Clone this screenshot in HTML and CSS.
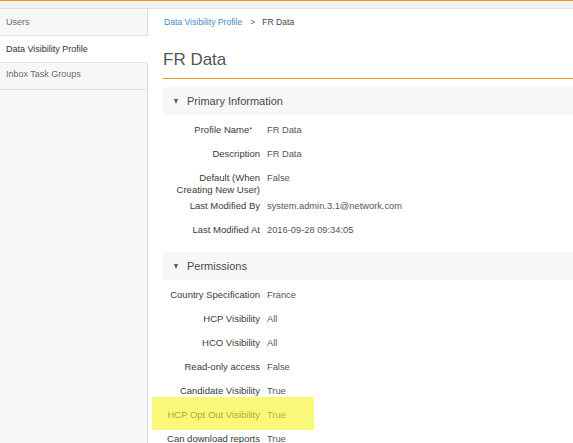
FILE: index.html
```html
<!DOCTYPE html>
<html>
<head>
<meta charset="utf-8">
<link rel="stylesheet" href="styles.css">
</head>
<body>
<div class="topbar"></div>
<div class="app">
  <nav class="sidebar">
    <div class="nav-item">Users</div>
    <div class="nav-item active">Data Visibility Profile</div>
    <div class="nav-item">Inbox Task Groups</div>
  </nav>
  <main class="main">
    <div class="breadcrumb"><span class="crumb-link">Data Visibility Profile</span><span class="crumb-sep">&gt;</span><span class="crumb-current">FR Data</span></div>
    <h1 class="title">FR Data</h1>

    <section class="section">
      <div class="section-header"><span class="caret"></span>Primary Information</div>
      <div class="section-body">
        <div class="row"><div class="label">Profile Name<span class="req">*</span></div><div class="value">FR Data</div></div>
        <div class="row"><div class="label">Description</div><div class="value">FR Data</div></div>
        <div class="row"><div class="label">Default (When Creating New User)</div><div class="value">False</div></div>
        <div class="row"><div class="label">Last Modified By</div><div class="value">system.admin.3.1@network.com</div></div>
        <div class="row"><div class="label">Last Modified At</div><div class="value">2016-09-28 09:34:05</div></div>
      </div>
    </section>

    <section class="section">
      <div class="section-header"><span class="caret"></span>Permissions</div>
      <div class="section-body">
        <div class="row"><div class="label">Country Specification</div><div class="value">France</div></div>
        <div class="row"><div class="label">HCP Visibility</div><div class="value">All</div></div>
        <div class="row"><div class="label">HCO Visibility</div><div class="value">All</div></div>
        <div class="row"><div class="label">Read-only access</div><div class="value">False</div></div>
        <div class="row"><div class="label">Candidate Visibility</div><div class="value">True</div></div>
        <div class="row marked"><div class="label">HCP Opt Out Visibility</div><div class="value">True</div><span class="highlight"></span></div>
        <div class="row"><div class="label">Can download reports</div><div class="value">True</div></div>
      </div>
    </section>
  </main>
</div>
</body>
</html>
```
FILE: styles.css
```css
html, body {
  margin: 0;
  padding: 0;
  height: 100%;
  overflow: hidden;
  background: #fff;
}

body {
  font-family: "Liberation Sans", Arial, Helvetica, sans-serif;
  color: #555;
}

.topbar {
  height: 7px;
  background: #f1f1f1;
  border-top: 1px solid #f7941d;
  border-bottom: 1px solid #dedede;
}

.app {
  display: flex;
  height: calc(100% - 9px);
}

.sidebar {
  width: 147px;
  flex: 0 0 147px;
  background: #f7f7f7;
  border-right: 1px solid #e1e1e1;
}

.nav-item {
  height: 26px;
  box-sizing: content-box;
  display: flex;
  align-items: center;
  padding-left: 6px;
  padding-bottom: 0;
  font-size: 9px;
  line-height: 10px;
  color: #6b6b6b;
  border-bottom: 1px solid #e3e3e3;
}

.nav-item:last-child {
  align-items: flex-start;
  padding-top: 6px;
  height: 20px;
}

.nav-item.active {
  background: #fff;
  color: #333;
  margin-right: -1px;
}

.main {
  flex: 1;
  min-width: 0;
  padding: 7px 0 0 15px;
}

.breadcrumb {
  height: 12px;
  line-height: 12px;
  font-size: 8.6px;
  padding-left: 1px;
  white-space: nowrap;
}

.crumb-link {
  color: #3f8cc6;
}

.crumb-sep {
  color: #666;
  margin: 0 7px 0 8px;
}

.crumb-current {
  color: #444;
}

.title {
  margin: 22px 0 0 0;
  font-size: 17px;
  line-height: 20px;
  font-weight: normal;
  color: #555;
  padding-bottom: 8px;
  border-bottom: 1px solid #f7941d;
}

.section-header {
  margin-top: 8px;
  height: 28px;
  background: #f7f7f7;
  display: flex;
  align-items: center;
  padding-left: 11px;
  font-size: 11px;
  color: #4a4a4a;
}

.section + .section .section-header {
  margin-top: 0;
}

.caret {
  width: 0;
  height: 0;
  border-left: 2.5px solid transparent;
  border-right: 2.5px solid transparent;
  border-top: 5px solid #555;
  margin-right: 9px;
  margin-top: 1px;
}

.section-body {
  padding: 9px 0 4px 0;
}

.section + .section .section-body {
  padding-top: 9.5px;
}

.row {
  display: flex;
  min-height: 24px;
  box-sizing: border-box;
  padding-bottom: 3.4px;
  line-height: 12.3px;
}

.row.marked {
  position: relative;
}

.label {
  width: 97px;
  flex: 0 0 97px;
  text-align: right;
  font-size: 9.5px;
  color: #3a3a3a;
}

.req {
  font-size: 7px;
  vertical-align: 1px;
  margin-right: 8px;
}

.value {
  margin-left: 7px;
  font-size: 9.3px;
  color: #555;
  white-space: nowrap;
}

.highlight {
  position: absolute;
  left: -11px;
  top: -12px;
  width: 162px;
  height: 33px;
  background: rgba(245, 243, 30, 0.6);
}
```
